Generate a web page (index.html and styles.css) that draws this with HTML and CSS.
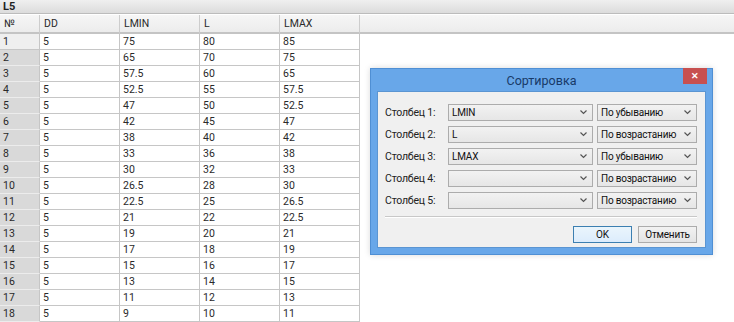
FILE: index.html
```html
<!DOCTYPE html>
<html lang="ru">
<head>
    <meta charset="UTF-8">
    <title>L5</title>
    <link rel="stylesheet" href="styles.css">
</head>
<body>

<div id="workspace">
    <div class="caption">L5</div>

    <div class="grid">
        <div class="row head">
            <div class="cell num">№</div>
            <div class="cell">DD</div>
            <div class="cell">LMIN</div>
            <div class="cell">L</div>
            <div class="cell">LMAX</div>
            <div class="cell filler"></div>
        </div>
        <div class="row current"><div class="cell num">1</div><div class="cell">5</div><div class="cell">75</div><div class="cell">80</div><div class="cell">85</div></div>
        <div class="row"><div class="cell num">2</div><div class="cell">5</div><div class="cell">65</div><div class="cell">70</div><div class="cell">75</div></div>
        <div class="row"><div class="cell num">3</div><div class="cell">5</div><div class="cell">57.5</div><div class="cell">60</div><div class="cell">65</div></div>
        <div class="row"><div class="cell num">4</div><div class="cell">5</div><div class="cell">52.5</div><div class="cell">55</div><div class="cell">57.5</div></div>
        <div class="row"><div class="cell num">5</div><div class="cell">5</div><div class="cell">47</div><div class="cell">50</div><div class="cell">52.5</div></div>
        <div class="row"><div class="cell num">6</div><div class="cell">5</div><div class="cell">42</div><div class="cell">45</div><div class="cell">47</div></div>
        <div class="row"><div class="cell num">7</div><div class="cell">5</div><div class="cell">38</div><div class="cell">40</div><div class="cell">42</div></div>
        <div class="row"><div class="cell num">8</div><div class="cell">5</div><div class="cell">33</div><div class="cell">36</div><div class="cell">38</div></div>
        <div class="row"><div class="cell num">9</div><div class="cell">5</div><div class="cell">30</div><div class="cell">32</div><div class="cell">33</div></div>
        <div class="row"><div class="cell num">10</div><div class="cell">5</div><div class="cell">26.5</div><div class="cell">28</div><div class="cell">30</div></div>
        <div class="row"><div class="cell num">11</div><div class="cell">5</div><div class="cell">22.5</div><div class="cell">25</div><div class="cell">26.5</div></div>
        <div class="row"><div class="cell num">12</div><div class="cell">5</div><div class="cell">21</div><div class="cell">22</div><div class="cell">22.5</div></div>
        <div class="row"><div class="cell num">13</div><div class="cell">5</div><div class="cell">19</div><div class="cell">20</div><div class="cell">21</div></div>
        <div class="row"><div class="cell num">14</div><div class="cell">5</div><div class="cell">17</div><div class="cell">18</div><div class="cell">19</div></div>
        <div class="row"><div class="cell num">15</div><div class="cell">5</div><div class="cell">15</div><div class="cell">16</div><div class="cell">17</div></div>
        <div class="row"><div class="cell num">16</div><div class="cell">5</div><div class="cell">13</div><div class="cell">14</div><div class="cell">15</div></div>
        <div class="row"><div class="cell num">17</div><div class="cell">5</div><div class="cell">11</div><div class="cell">12</div><div class="cell">13</div></div>
        <div class="row"><div class="cell num">18</div><div class="cell">5</div><div class="cell">9</div><div class="cell">10</div><div class="cell">11</div></div>
    </div>

    <!-- окно сортировки поверх таблицы -->
    <div class="dialog">
        <div class="dialog-title">
            <span>Сортировка</span>
            <div class="close">&#x2715;</div>
        </div>
        <div class="dialog-body">
            <div class="sort-row">
                <label>Столбец 1:</label>
                <div class="combo wide">LMIN<svg width="7" height="5" viewBox="0 0 7 5"><polyline points="0.5,0.5 3.5,3.5 6.5,0.5"/></svg></div>
                <div class="combo order">По убыванию<svg width="7" height="5" viewBox="0 0 7 5"><polyline points="0.5,0.5 3.5,3.5 6.5,0.5"/></svg></div>
            </div>
            <div class="sort-row">
                <label>Столбец 2:</label>
                <div class="combo wide">L<svg width="7" height="5" viewBox="0 0 7 5"><polyline points="0.5,0.5 3.5,3.5 6.5,0.5"/></svg></div>
                <div class="combo order">По возрастанию<svg width="7" height="5" viewBox="0 0 7 5"><polyline points="0.5,0.5 3.5,3.5 6.5,0.5"/></svg></div>
            </div>
            <div class="sort-row">
                <label>Столбец 3:</label>
                <div class="combo wide">LMAX<svg width="7" height="5" viewBox="0 0 7 5"><polyline points="0.5,0.5 3.5,3.5 6.5,0.5"/></svg></div>
                <div class="combo order">По убыванию<svg width="7" height="5" viewBox="0 0 7 5"><polyline points="0.5,0.5 3.5,3.5 6.5,0.5"/></svg></div>
            </div>
            <div class="sort-row">
                <label>Столбец 4:</label>
                <div class="combo wide"><svg width="7" height="5" viewBox="0 0 7 5"><polyline points="0.5,0.5 3.5,3.5 6.5,0.5"/></svg></div>
                <div class="combo order">По возрастанию<svg width="7" height="5" viewBox="0 0 7 5"><polyline points="0.5,0.5 3.5,3.5 6.5,0.5"/></svg></div>
            </div>
            <div class="sort-row">
                <label>Столбец 5:</label>
                <div class="combo wide"><svg width="7" height="5" viewBox="0 0 7 5"><polyline points="0.5,0.5 3.5,3.5 6.5,0.5"/></svg></div>
                <div class="combo order">По возрастанию<svg width="7" height="5" viewBox="0 0 7 5"><polyline points="0.5,0.5 3.5,3.5 6.5,0.5"/></svg></div>
            </div>

            <div class="separator"></div>

            <div class="buttons">
                <button class="btn default">OK</button>
                <button class="btn">Отменить</button>
            </div>
        </div>
    </div>
</div>

</body>
</html>
```

FILE: styles.css
```css
body {
    margin: 0;
    padding: 0;
    font-family: Roboto, "Noto Sans", sans-serif;
    font-size: 10.5px;
    color: #2a2a2a;
    background-color: #ffffff;
    overflow: hidden;
}

#workspace {
    position: relative;
    width: 734px;
    height: 322px;
}

/* --- заголовок таблицы --- */
.caption {
    height: 13px;
    line-height: 13px;
    padding-left: 3px;
    font-size: 11px;
    font-weight: bold;
    background: linear-gradient(#efefef, #dcdcdc);
    border-bottom: 1px solid #bcbcbc;
    margin-bottom: 1px;
    color: #222;
}

.grid {
    display: flex;
    flex-direction: column;
}

.row {
    display: flex;
    height: 16px;
}

.cell {
    width: 80px;
    height: 16px;
    box-sizing: border-box;
    padding-left: 3px;
    line-height: 15px;
    border-right: 1px solid #c6c6c6;
    border-bottom: 1px solid #c6c6c6;
    white-space: nowrap;
    overflow: hidden;
}

.cell.num {
    width: 40px;
    background-color: #d9d9d9;
    border-bottom-color: #ececec;
}

.row.current .cell.num {
    background-color: #efefef;
    border-bottom-color: #c6c6c6;
}

.row.head {
    height: 19px;
}

.row.head .cell {
    height: 19px;
    line-height: 17px;
    padding-left: 4px;
    background: linear-gradient(#f6f6f6, #ececec);
    border-bottom: 2px solid #c4c4c4;
    border-right-color: #cdcdcd;
}

.row.head .cell.filler {
    flex: 1;
    border-right: none;
}

/* --- окно сортировки --- */
.dialog {
    position: absolute;
    left: 370px;
    top: 68px;
    width: 343px;
    height: 187px;
    box-sizing: border-box;
    display: flex;
    flex-direction: column;
    background-color: #68a7e9;
    border: 1px solid #4f8fd4;
    box-shadow: 0 0 6px rgba(0, 0, 0, 0.15);
}

.dialog-title {
    height: 23px;
    display: flex;
    justify-content: center;
    align-items: center;
    position: relative;
    font-size: 12.5px;
    color: #183a68;
}

.close {
    position: absolute;
    right: 5px;
    top: -1px;
    width: 24px;
    height: 16px;
    background-color: #c75050;
    color: #ffffff;
    font-size: 9px;
    font-weight: bold;
    display: flex;
    justify-content: center;
    align-items: center;
}

.dialog-body {
    flex: 1;
    margin: 0 6px 6px 6px;
    background-color: #f0f0f0;
    border: 1px solid #5b95d2;
    padding: 12px 8px 4px 7px;
    display: flex;
    flex-direction: column;
    gap: 5px;
    letter-spacing: -0.2px;
}

.sort-row {
    display: flex;
    align-items: center;
    gap: 4px;
    height: 17px;
}

.sort-row label {
    width: 59px;
    color: #222;
    white-space: nowrap;
}

.combo {
    height: 17px;
    box-sizing: border-box;
    border: 1px solid #acacac;
    background: linear-gradient(#f2f2f2, #e6e6e6);
    display: flex;
    align-items: center;
    padding: 0 5px 0 3px;
    font-size: 10px;
    color: #111;
    white-space: nowrap;
}

.combo.wide {
    width: 145px;
}

.combo.order {
    width: 100px;
}

.combo svg {
    margin-left: auto;
    flex-shrink: 0;
}

.combo polyline {
    fill: none;
    stroke: #555;
    stroke-width: 1.2;
}

.separator {
    height: 0;
    border-top: 1px solid #c8c8c8;
    border-bottom: 1px solid #ffffff;
    margin-top: 2px;
}

.buttons {
    display: flex;
    justify-content: flex-end;
    gap: 6px;
    margin-top: 3px;
}

.btn {
    width: 59px;
    height: 17px;
    padding: 0;
    font-family: inherit;
    font-size: 10px;
    letter-spacing: -0.2px;
    color: #111;
    border: 1px solid #acacac;
    background: linear-gradient(#f2f2f2, #e4e4e4);
    border-radius: 0;
}

.btn.default {
    border-color: #3c7fb1;
    background: linear-gradient(#eaf5fc, #dcecfc);
}
```
